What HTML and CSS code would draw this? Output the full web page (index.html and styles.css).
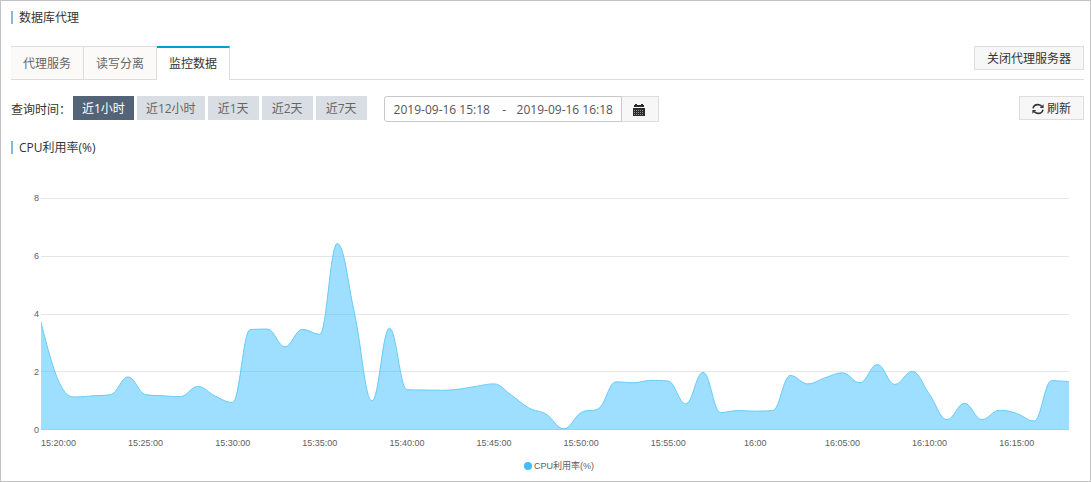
FILE: index.html
```html
<!DOCTYPE html>
<html lang="zh-CN">
<head>
<meta charset="utf-8">
<meta name="viewport" content="width=device-width, initial-scale=1">
<title>数据库代理</title>
<link rel="stylesheet" href="styles.css">
</head>
<body>
<main class="page">
  <h1 class="heading">数据库代理</h1>

  <nav class="tabs">
    <button class="tab" type="button">代理服务</button>
    <button class="tab" type="button">读写分离</button>
    <button class="tab tab-active" type="button">监控数据</button>
    <button class="btn tabs-action" type="button">关闭代理服务器</button>
  </nav>

  <div class="filters">
    <span class="filters-label">查询时间：</span>
    <div class="ranges">
      <button class="range range-active" type="button">近1小时</button>
      <button class="range" type="button">近12小时</button>
      <button class="range" type="button">近1天</button>
      <button class="range" type="button">近2天</button>
      <button class="range" type="button">近7天</button>
    </div>
    <div class="period">
      <div class="period-box">
        <input class="period-input" type="text" aria-label="开始时间" value="2019-09-16 15:18">
        <span class="period-dash">-</span>
        <input class="period-input" type="text" aria-label="结束时间" value="2019-09-16 16:18">
      </div>
      <button class="period-btn" type="button" aria-label="选择日期">
        <svg class="icon-calendar" viewBox="0 0 12 12" aria-hidden="true">
          <path fill="#2b2b2b" d="M1 1h1V0h2v1h4V0h2v1h1v2H1z"/>
          <path fill="#2b2b2b" d="M0 4h12v8H0z"/>
          <path stroke="#c9bda6" stroke-width=".7" stroke-dasharray="1 1" d="M1 6.5h10M1 8.5h10M1 10.5h10"/>
        </svg>
      </button>
    </div>
    <button class="btn btn-refresh" type="button">
      <svg class="icon-refresh" viewBox="0 0 12 12" aria-hidden="true">
        <path fill="none" stroke="#333" stroke-width="1.6" d="M1 5.4C1.6 2.8 3.6 1.6 5.8 1.6c1.6 0 2.8.6 3.9 1.7M11 6.6c-.6 2.6-2.6 3.8-4.8 3.8-1.6 0-2.8-.6-3.9-1.7"/>
        <path fill="#333" d="M11.6 1.2v3.9H7.7zM.4 10.8V6.9h3.9z"/>
      </svg>
      刷新
    </button>
  </div>

  <h2 class="heading">CPU利用率(%)</h2>

  <section class="chart">
    <div class="y-axis"><span>8</span><span>6</span><span>4</span><span>2</span><span>0</span></div>
    <div class="plot">
      <div class="grid-lines"><i></i><i></i><i></i><i></i><i></i></div>
      <svg class="series" viewBox="0 0 1028 231" preserveAspectRatio="none" role="img" aria-label="CPU利用率(%)">
        <path class="series-area" id="area"/>
        <path class="series-line" id="line"/>
      </svg>
    </div>
    <div class="x-axis">
      <span>15:20:00</span><span>15:25:00</span><span>15:30:00</span><span>15:35:00</span><span>15:40:00</span><span>15:45:00</span><span>15:50:00</span><span>15:55:00</span><span>16:00</span><span>16:05:00</span><span>16:10:00</span><span>16:15:00</span>
    </div>
    <div class="legend"><i class="legend-dot"></i>CPU利用率(%)</div>
  </section>
</main>
<script src="chart.js"></script>
</body>
</html>
```

FILE: styles.css
```css
* {
  box-sizing: border-box;
}

body {
  margin: 0;
  background: #fff;
  color: #333;
  font: 12px/18px "Open Sans", "Noto Sans CJK SC", sans-serif;
}

button,
input {
  margin: 0;
  font: inherit;
  color: inherit;
}

button {
  cursor: pointer;
}

.page {
  min-height: 100vh;
  padding: 10px 6px 6px 10px;
  border: 1px solid #c3c3c3;
}

.heading {
  display: flex;
  align-items: center;
  gap: 6px;
  margin: 0;
  height: 13px;
  font-size: 12px;
  font-weight: 400;
  line-height: 13px;
}

.heading::before {
  content: "";
  width: 2px;
  height: 13px;
  background: #88b7e0;
}

.tabs {
  display: flex;
  align-items: flex-start;
  margin-top: 22px;
  border-bottom: 1px solid #ddd;
}

.tab {
  height: 33px;
  padding: 2px 12px 0;
  border: solid #ddd;
  border-width: 1px 1px 0 0;
  background: #fbfaf8;
  color: #666;
}

.tab-active {
  height: 34px;
  margin-bottom: -1px;
  padding-top: 0;
  border-top: 2px solid #00a2ca;
  background: #fff;
  color: #333;
}

.btn {
  display: flex;
  align-items: center;
  gap: 3px;
  height: 24px;
  padding: 2px 12px 0;
  border: 1px solid #ddd;
  background: #f7f7f7;
}

.tabs-action {
  margin-left: auto;
}

.filters {
  display: flex;
  align-items: flex-start;
  margin-top: 16px;
}

.filters-label {
  width: 62px;
  line-height: 27px;
  white-space: nowrap;
}

.ranges {
  display: flex;
  gap: 3px;
}

.range {
  min-width: 51px;
  height: 24px;
  padding: 2px 9px 0;
  border: 0;
  background: #d9dde4;
  color: #666;
  white-space: nowrap;
}

.range-active {
  background: #546478;
  color: #fff;
}

.period {
  display: flex;
  margin-left: 17px;
}

.period-box {
  display: flex;
  align-items: center;
  height: 26px;
  padding: 2px 6px 0 9px;
  border: 1px solid #c8c8c8;
  border-radius: 3px 0 0 3px;
  color: #555;
}

.period-input {
  width: 98px;
  padding: 0;
  border: 0;
  background: none;
}

.period-dash {
  width: 25px;
  text-align: center;
}

.period-btn {
  display: flex;
  align-items: center;
  justify-content: center;
  width: 37px;
  height: 26px;
  padding: 2px 1px 0 0;
  border: 1px solid #ddd;
  border-left: 0;
  background: #f7f7f7;
}

.icon-calendar,
.icon-refresh {
  width: 12px;
  height: 12px;
}

.btn-refresh {
  margin-left: auto;
}

.filters + .heading {
  margin-top: 18px;
}

.chart {
  display: grid;
  grid-template-columns: 30px 1fr;
  margin-top: 44px;
  padding-right: 15px;
  color: #606060;
  font: 9px/12px "Liberation Sans", "Noto Sans CJK SC", sans-serif;
}

.y-axis {
  display: flex;
  flex-direction: column;
  justify-content: space-between;
  margin: -6px 0;
  padding-right: 2px;
  text-align: right;
}

.plot {
  display: grid;
  height: 232px;
}

.grid-lines,
.series {
  grid-area: 1 / 1;
  width: 100%;
  height: 232px;
}

.grid-lines {
  display: flex;
  flex-direction: column;
  justify-content: space-between;
}

.grid-lines i {
  height: 1px;
  background: #e6e6e6;
}

.series-area {
  fill: #3dbeff;
  fill-opacity: 0.5;
}

.series-line {
  fill: none;
  stroke: #66ccfa;
  stroke-width: 1px;
  vector-effect: non-scaling-stroke;
}

.x-axis {
  display: grid;
  grid-column: 2;
  grid-template-columns: repeat(12, 1fr);
  margin: 7px 0.85% 0 -2.54%;
  text-align: center;
}

.legend {
  display: flex;
  grid-column: 1 / -1;
  align-items: center;
  justify-content: center;
  gap: 2px;
  margin-top: 11px;
  padding-left: 38px;
}

.legend-dot {
  width: 8px;
  height: 8px;
  border-radius: 50%;
  background: #3dbeff;
}
```

FILE: chart.js
```js
// CPU utilisation in percent, one sample per minute from 15:19 to 16:18.
const values = [
  3.72, 1.70, 1.14, 1.18, 1.22, 1.83, 1.22, 1.18, 1.15, 1.50,
  1.17, 0.95, 3.46, 3.48, 2.87, 3.47, 3.30, 6.43, 4.00, 1.00,
  3.51, 1.39, 1.38, 1.37, 1.41, 1.51, 1.59, 1.20, 0.76, 0.54,
  0.04, 0.60, 0.74, 1.66, 1.63, 1.71, 1.69, 0.90, 1.99, 0.60,
  0.67, 0.65, 0.67, 1.88, 1.59, 1.80, 1.97, 1.63, 2.26, 1.57,
  2.02, 1.22, 0.36, 0.92, 0.36, 0.68, 0.57, 0.31, 1.70, 1.67
];
const width = 1028;
const height = 231;
const max = 8;

const points = values.map((v, i) => ({
  x: i * width / (values.length - 1),
  y: height - v * height / max
}));

// Control points follow the neighbours' slope but never overshoot a sample.
function controls(prev, cur, next) {
  const lx = (1.5 * cur.x + prev.x) / 2.5;
  const rx = (1.5 * cur.x + next.x) / 2.5;
  let ly = (1.5 * cur.y + prev.y) / 2.5;
  let ry = (1.5 * cur.y + next.y) / 2.5;
  const shift = (ry - ly) * (rx - cur.x) / (rx - lx) + cur.y - ry;
  ly += shift;
  ry += shift;
  if (ly > prev.y && ly > cur.y) {
    ly = Math.max(prev.y, cur.y);
    ry = 2 * cur.y - ly;
  } else if (ly < prev.y && ly < cur.y) {
    ly = Math.min(prev.y, cur.y);
    ry = 2 * cur.y - ly;
  }
  if (ry > next.y && ry > cur.y) {
    ry = Math.max(next.y, cur.y);
    ly = 2 * cur.y - ry;
  } else if (ry < next.y && ry < cur.y) {
    ry = Math.min(next.y, cur.y);
    ly = 2 * cur.y - ry;
  }
  return { left: { x: lx, y: ly }, right: { x: rx, y: ry } };
}

let path = `M${points[0].x} ${points[0].y}`;
let out = points[0];
for (let i = 1; i < points.length; i++) {
  const cur = points[i];
  const next = points[i + 1];
  const c = next ? controls(points[i - 1], cur, next) : { left: cur, right: cur };
  path += `C${out.x} ${out.y} ${c.left.x} ${c.left.y} ${cur.x} ${cur.y}`;
  out = c.right;
}

document.getElementById("line").setAttribute("d", path);
document.getElementById("area").setAttribute("d", `${path}V${height}H0Z`);
```
